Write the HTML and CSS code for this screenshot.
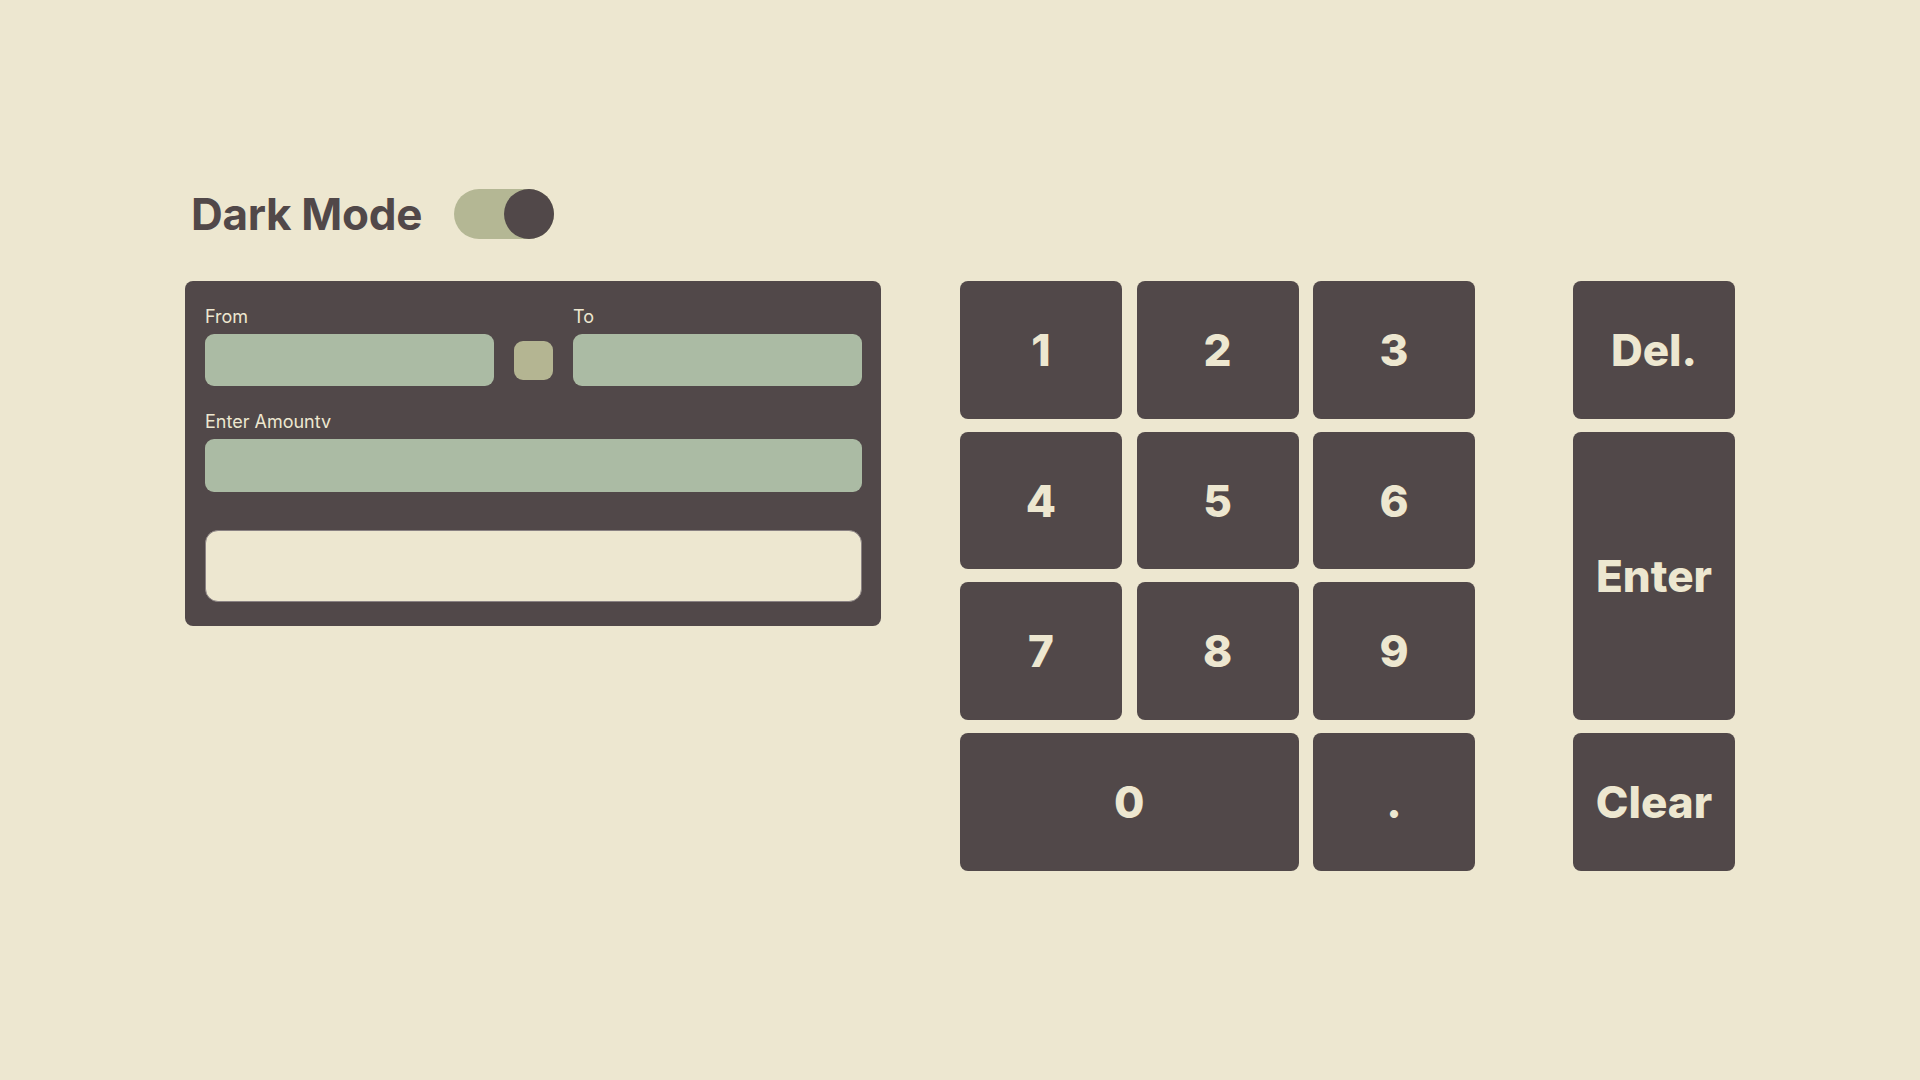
FILE: index.html
```html
<!DOCTYPE html>
<html lang="en">
<head>
<meta charset="utf-8">
<title>Currency Converter</title>
<link rel="stylesheet" href="styles.css">
</head>
<body>
<div class="page">
  <header class="header">
    <h1 class="title">Dark Mode</h1>
    <div class="toggle"><span class="knob"></span></div>
  </header>
  <main class="main">
    <section class="panel">
      <div class="pair">
        <label class="label">From</label>
        <span></span>
        <label class="label">To</label>
        <div class="field"></div>
        <button class="swap" aria-label="swap"></button>
        <div class="field"></div>
      </div>
      <label class="label amount-label">Enter Amountv</label>
      <div class="field amount"></div>
      <div class="result"></div>
    </section>
    <section class="keypad">
      <div class="digits">
        <button class="key">1</button>
        <button class="key">2</button>
        <button class="key">3</button>
        <button class="key">4</button>
        <button class="key">5</button>
        <button class="key">6</button>
        <button class="key">7</button>
        <button class="key">8</button>
        <button class="key">9</button>
        <button class="key wide">0</button>
        <button class="key">.</button>
      </div>
      <div class="actions">
        <button class="key">Del.</button>
        <button class="key">Enter</button>
        <button class="key">Clear</button>
      </div>
    </section>
  </main>
</div>
</body>
</html>
```
FILE: styles.css
```css
* { box-sizing: border-box; }
html, body { margin: 0; padding: 0; }
body {
  background: #ede7d0;
  font-family: Inter, "Noto Sans", sans-serif;
  width: 1920px;
  height: 1080px;
  overflow: hidden;
}
.page {
  padding: 189px 0 0 185px;
}
.header {
  display: flex;
  align-items: center;
  gap: 32px;
  padding-left: 6px;
  height: 50px;
}
.title {
  margin: 0;
  font-size: 44px;
  font-weight: 700;
  color: #514849;
  letter-spacing: -0.3px;
  line-height: 50px;
}
.toggle {
  width: 100px;
  height: 50px;
  border-radius: 25px;
  background: #b4b794;
  display: flex;
  justify-content: flex-end;
}
.knob {
  width: 50px;
  height: 50px;
  border-radius: 50%;
  background: #514849;
}
.main {
  display: flex;
  align-items: flex-start;
  gap: 79px;
  margin-top: 42px;
}
.panel {
  width: 696px;
  height: 345px;
  background: #514849;
  border-radius: 8px;
  padding: 25px 19px 24px 20px;
  display: flex;
  flex-direction: column;
}
.pair {
  display: grid;
  grid-template-columns: 289px 39px 1fr;
  column-gap: 20px;
  row-gap: 6px;
  align-items: center;
}
.label {
  display: block;
  color: #ede7d0;
  font-size: 18px;
  line-height: 22px;
}
.amount-label {
  margin: 25px 0 6px;
}
.field {
  height: 52px;
  background: #abbba4;
  border-radius: 9px;
}
.field.amount { height: 53px; }
.swap {
  width: 39px;
  height: 39px;
  border: none;
  padding: 0;
  border-radius: 9px;
  background: #b4b592;
}
.result {
  margin-top: 38px;
  height: 72px;
  background: #ede7d0;
  border: 1.5px solid #8a8283;
  border-radius: 13px;
}
.keypad {
  display: flex;
  align-items: flex-start;
  gap: 98px;
}
.digits {
  display: grid;
  grid-template-columns: repeat(3, 162px);
  grid-auto-rows: 137.7px;
  column-gap: 14.5px;
  row-gap: 13px;
}
.actions {
  display: grid;
  grid-template-columns: 162px;
  grid-template-rows: 137.7px 288.4px 137.7px;
  row-gap: 13px;
}
.key {
  border: none;
  border-radius: 8px;
  background: #514849;
  color: #ede7d0;
  font-family: Inter, "Noto Sans", sans-serif;
  font-size: 44px;
  font-weight: 800;
  display: flex;
  align-items: center;
  justify-content: center;
  padding: 0;
}
.wide { grid-column: span 2; }
```
